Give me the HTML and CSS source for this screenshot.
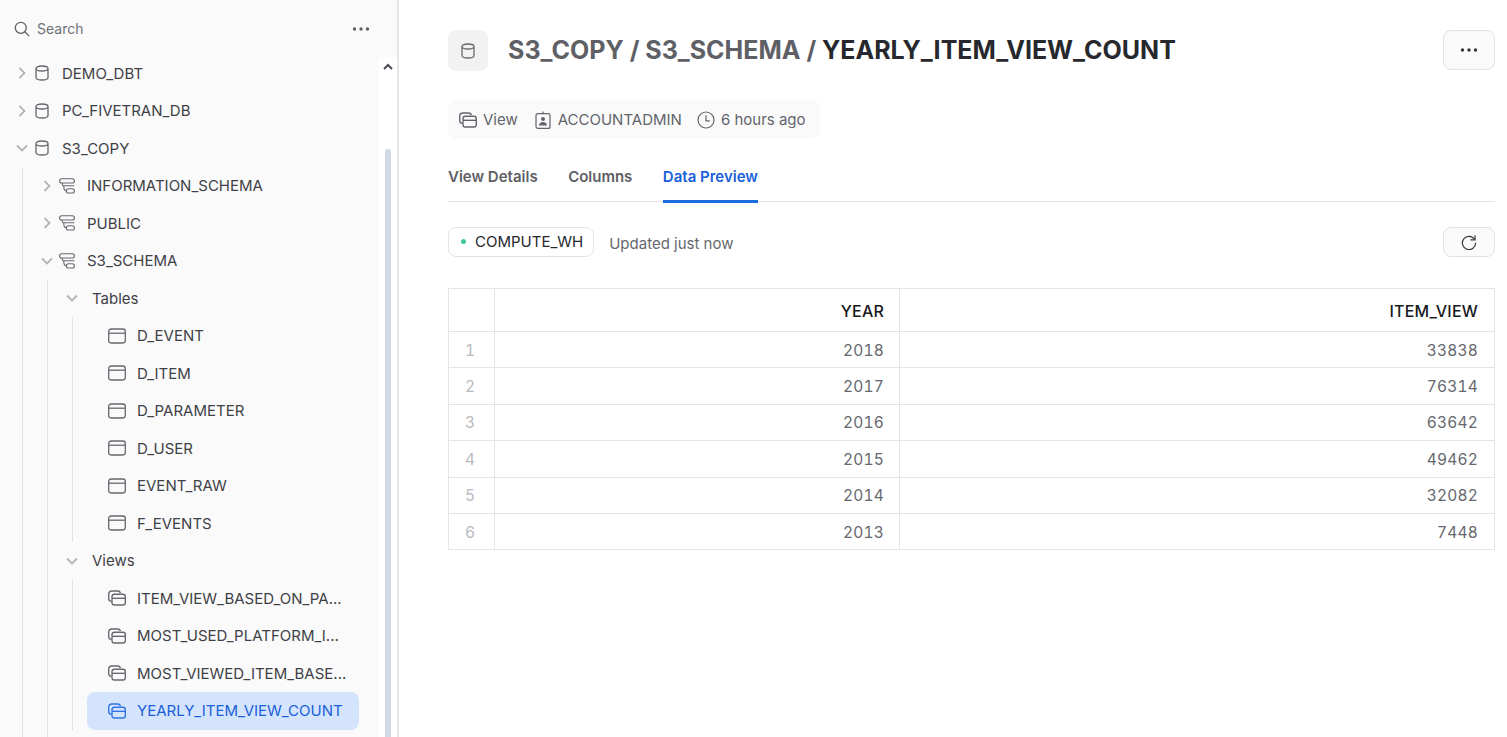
FILE: index.html
```html
<!DOCTYPE html>
<html lang="en">
<head>
<meta charset="utf-8">
<title>YEARLY_ITEM_VIEW_COUNT</title>
<link rel="stylesheet" href="styles.css">
</head>
<body>
<svg class="sprite" xmlns="http://www.w3.org/2000/svg">
  <symbol id="i-db" viewBox="0 0 16 16"><path d="M2 3.500C2 2 4.600 1 8 1s6 1 6 2.500v9C14 14 11.400 15 8 15s-6-1-6-2.500zM2 3.500C2 5 4.600 6 8 6s6-1 6-2.500" fill="none" stroke="currentColor" stroke-width="1.300"/></symbol>
  <symbol id="i-schema" viewBox="0 0 16 16"><g fill="none" stroke="currentColor" stroke-width="1.100"><rect x=".6" y=".8" width="14.800" height="4.200" rx="2.100"/><path d="M3.200 5v1.200c0 1 .6 1.600 1.600 1.600h10.600"/><rect x="7.400" y="10.800" width="8" height="4.200" rx="2.100"/><path d="M4.800 7.800v1c0 2.200.8 4 2.600 4.100"/></g></symbol>
  <symbol id="i-table" viewBox="0 0 18 16"><g fill="none" stroke="currentColor" stroke-width="1.300"><rect x=".7" y="1" width="16.600" height="14" rx="2.400"/><path d="M.7 5.200h16.600"/></g></symbol>
  <symbol id="i-view" viewBox="0 0 18 16"><g fill="none" stroke="currentColor" stroke-width="1.350"><path d="M3.700 11.400c-1.700 0-3-1.200-3-2.900V4.200c0-1.900 1.400-3.200 3.300-3.200h5.500c1.500 0 2.600.7 3 2"/><rect x="4" y="4.200" width="13.300" height="10.800" rx="2.300"/><path d="M4 8.300h13.300"/></g></symbol>
  <symbol id="i-search" viewBox="0 0 16 16"><g fill="none" stroke="currentColor" stroke-width="1.300"><circle cx="6.800" cy="6.800" r="5.500"/><path d="M10.800 10.800l4.300 4.300"/></g></symbol>
  <symbol id="i-badge" viewBox="0 0 16 18"><g fill="none" stroke="currentColor" stroke-width="1.200"><rect x="1" y="2.600" width="14" height="14.800" rx="2"/><path d="M8 .5v2"/></g><circle cx="8" cy="8" r="2" fill="currentColor"/><path d="M4 14.500c0-2.300 1.700-3.500 4-3.500s4 1.200 4 3.500z" fill="currentColor"/></symbol>
  <symbol id="i-clock" viewBox="0 0 18 18"><g fill="none" stroke="currentColor" stroke-width="1.200"><circle cx="9" cy="9" r="8"/><path d="M9 4.300V9.800h3.800"/></g></symbol>
  <symbol id="i-refresh" viewBox="0 0 16 16"><g fill="none" stroke="currentColor" stroke-width="1.200"><path d="M13.600 5.500A6.600 6.600 0 1 0 14.600 8.800"/><path d="M14 1.200v4.600H9.400"/></g></symbol>
  <symbol id="i-more" viewBox="0 0 18 4"><g fill="currentColor"><circle cx="2.500" cy="2" r="1.700"/><circle cx="9" cy="2" r="1.700"/><circle cx="15.500" cy="2" r="1.700"/></g></symbol>
  <symbol id="i-right" viewBox="0 0 10 12"><path d="M2.500 1l5 5-5 5" fill="none" stroke="currentColor" stroke-width="1.800"/></symbol>
  <symbol id="i-down" viewBox="0 0 12 10"><path d="M1 2.500l5 5 5-5" fill="none" stroke="currentColor" stroke-width="1.800"/></symbol>
  <symbol id="i-up" viewBox="0 0 10 8"><path d="M1 6l4-4 4 4" fill="none" stroke="currentColor" stroke-width="2"/></symbol>
</svg>

<div class="app">
  <aside class="sidebar">
    <div class="search-bar">
      <svg class="ic-search"><use href="#i-search"/></svg>
      <span class="search-label">Search</span>
      <svg class="ic-more-side"><use href="#i-more"/></svg>
    </div>
    <div class="side-body">
      <nav class="tree">
        <div class="row"><span class="chev"><svg class="chev-r"><use href="#i-right"/></svg></span><svg class="ic-db"><use href="#i-db"/></svg><span class="lbl">DEMO_DBT</span></div>
        <div class="row"><span class="chev"><svg class="chev-r"><use href="#i-right"/></svg></span><svg class="ic-db"><use href="#i-db"/></svg><span class="lbl">PC_FIVETRAN_DB</span></div>
        <div class="row"><span class="chev"><svg class="chev-d"><use href="#i-down"/></svg></span><svg class="ic-db"><use href="#i-db"/></svg><span class="lbl">S3_COPY</span></div>
        <div class="nest">
          <div class="row"><span class="chev"><svg class="chev-r"><use href="#i-right"/></svg></span><svg class="ic-db"><use href="#i-schema"/></svg><span class="lbl">INFORMATION_SCHEMA</span></div>
          <div class="row"><span class="chev"><svg class="chev-r"><use href="#i-right"/></svg></span><svg class="ic-db"><use href="#i-schema"/></svg><span class="lbl">PUBLIC</span></div>
          <div class="row"><span class="chev"><svg class="chev-d"><use href="#i-down"/></svg></span><svg class="ic-db"><use href="#i-schema"/></svg><span class="lbl">S3_SCHEMA</span></div>
          <div class="nest">
            <div class="row group"><span class="chev"><svg class="chev-d"><use href="#i-down"/></svg></span><span class="lbl">Tables</span></div>
            <div class="nest leafs">
              <div class="row leaf"><svg class="ic-leaf"><use href="#i-table"/></svg><span class="lbl">D_EVENT</span></div>
              <div class="row leaf"><svg class="ic-leaf"><use href="#i-table"/></svg><span class="lbl">D_ITEM</span></div>
              <div class="row leaf"><svg class="ic-leaf"><use href="#i-table"/></svg><span class="lbl">D_PARAMETER</span></div>
              <div class="row leaf"><svg class="ic-leaf"><use href="#i-table"/></svg><span class="lbl">D_USER</span></div>
              <div class="row leaf"><svg class="ic-leaf"><use href="#i-table"/></svg><span class="lbl">EVENT_RAW</span></div>
              <div class="row leaf"><svg class="ic-leaf"><use href="#i-table"/></svg><span class="lbl">F_EVENTS</span></div>
            </div>
            <div class="row group"><span class="chev"><svg class="chev-d"><use href="#i-down"/></svg></span><span class="lbl">Views</span></div>
            <div class="nest leafs">
              <div class="row leaf"><svg class="ic-leaf"><use href="#i-view"/></svg><span class="lbl">ITEM_VIEW_BASED_ON_PA...</span></div>
              <div class="row leaf"><svg class="ic-leaf"><use href="#i-view"/></svg><span class="lbl">MOST_USED_PLATFORM_I...</span></div>
              <div class="row leaf"><svg class="ic-leaf"><use href="#i-view"/></svg><span class="lbl">MOST_VIEWED_ITEM_BASE...</span></div>
              <div class="row leaf selected"><svg class="ic-leaf"><use href="#i-view"/></svg><span class="lbl">YEARLY_ITEM_VIEW_COUNT</span></div>
            </div>
            <div class="tree-tail"></div>
          </div>
        </div>
      </nav>
      <div class="scrollbar">
        <svg class="scroll-up"><use href="#i-up"/></svg>
        <div class="scroll-thumb"></div>
      </div>
    </div>
  </aside>

  <main class="main">
    <header class="title-row">
      <div class="title-icon"><svg class="ic-title"><use href="#i-db"/></svg></div>
      <h1 class="title"><span class="crumb">S3_COPY / S3_SCHEMA / </span>YEARLY_ITEM_VIEW_COUNT</h1>
      <button class="btn btn-more"><svg class="ic-more-main"><use href="#i-more"/></svg></button>
    </header>

    <div class="meta">
      <span class="meta-item m-view"><svg class="ic-meta-view"><use href="#i-view"/></svg>View</span>
      <span class="meta-item m-role"><svg class="ic-meta-badge"><use href="#i-badge"/></svg>ACCOUNTADMIN</span>
      <span class="meta-item"><svg class="ic-meta-clock"><use href="#i-clock"/></svg>6 hours ago</span>
    </div>

    <div class="tabs">
      <span class="tab">View Details</span>
      <span class="tab">Columns</span>
      <span class="tab active">Data Preview</span>
    </div>

    <div class="toolbar">
      <span class="wh"><span class="wh-dot"></span>COMPUTE_WH</span>
      <span class="updated">Updated just now</span>
      <button class="btn btn-refresh"><svg class="ic-refresh"><use href="#i-refresh"/></svg></button>
    </div>

    <table class="grid">
      <colgroup><col class="c-idx"><col class="c-year"><col></colgroup>
      <thead><tr><th></th><th>YEAR</th><th>ITEM_VIEW</th></tr></thead>
      <tbody>
        <tr><td class="idx">1</td><td>2018</td><td>33838</td></tr>
        <tr><td class="idx">2</td><td>2017</td><td>76314</td></tr>
        <tr><td class="idx">3</td><td>2016</td><td>63642</td></tr>
        <tr><td class="idx">4</td><td>2015</td><td>49462</td></tr>
        <tr><td class="idx">5</td><td>2014</td><td>32082</td></tr>
        <tr><td class="idx">6</td><td>2013</td><td>7448</td></tr>
      </tbody>
    </table>
  </main>
</div>
</body>
</html>
```
FILE: styles.css
```css
* { box-sizing: border-box; }
html, body { margin: 0; height: 100%; overflow: hidden; }
body { font-family: Inter, "Liberation Sans", sans-serif; font-size: 15px; color: #3f4147; background: #fff; }
.sprite { display: none; }
.app { display: flex; height: 100vh; }

/* Sidebar */
.sidebar { width: 399px; flex: none; display: flex; flex-direction: column; background: #fafafa; border-right: 2px solid #e6e6e6; }
.search-bar { height: 54.700px; flex: none; display: flex; align-items: center; padding: 3px 27px 0 14px; }
.ic-search { width: 16px; height: 16px; color: #5f6168; }
.search-label { margin-left: 7px; color: #6f7178; font-size: 14px; flex: 1; }
.ic-more-side { width: 18px; height: 4px; color: #5f6168; }
.side-body { flex: 1; min-height: 0; display: flex; }
.tree { flex: 1; min-width: 0; overflow: hidden; padding-left: 15px; }
.scrollbar { width: 18px; flex: none; margin-top: 3.300px; background: #fff; display: flex; flex-direction: column; align-items: center; }
.scroll-up { width: 10px; height: 8px; margin: 5px 0 0; color: #4a4c52; }
.scroll-thumb { width: 6px; flex: 1; margin-top: 78px; background: #cfdae4; border-radius: 3px 3px 0 0; }

.row { height: 37.5px; display: flex; align-items: center; white-space: nowrap; }
.chev { width: 14px; flex: none; display: flex; align-items: center; justify-content: center; color: #b4b5b8; }
.chev-r { width: 10px; height: 12px; }
.chev-d { width: 12px; height: 10px; }
.ic-db { width: 16px; height: 16px; margin-left: 5px; flex: none; color: #66686f; }
.lbl { margin-left: 12px; }
.nest { margin-left: 7px; border-left: 1px solid #e2e2e2; padding-left: 17px; }
.nest .nest.leafs { padding-left: 14px; }
.group .lbl { margin-left: 13px; }
.leaf { padding-left: 21px; border-radius: 8px; width: 272px; }
.ic-leaf { width: 18px; height: 16px; flex: none; color: #66686f; }
.leaf .lbl { margin-left: 11px; }
.selected { background: #d4e4fd; color: #1a5fd9; }
.selected .ic-leaf { color: #2f74e6; }
.tree-tail { height: 40px; }

/* Main */
.main { flex: 1; min-width: 0; padding: 30px 12px 0 49px; }
.title-row { display: flex; align-items: center; height: 41px; }
.title-icon { width: 40px; height: 41px; border-radius: 8px; background: #f2f2f2; display: flex; align-items: center; justify-content: center; color: #66686f; flex: none; }
.ic-title { width: 16px; height: 16px; }
.title { flex: 1; margin: 0 0 0 20px; font-size: 25.030px; font-weight: 700; color: #26282d; line-height: 41px; white-space: nowrap; }
.crumb { color: #5e6066; }
.btn { width: 52px; flex: none; padding: 0; display: flex; align-items: center; justify-content: center; background: #fafafa; border: 1px solid #e3e3e3; border-radius: 8px; color: #33353a; }
.btn-more { height: 40px; margin-bottom: 1px; }
.ic-more-main { width: 18px; height: 4px; }
.btn-refresh { height: 30px; margin-left: auto; }
.ic-refresh { width: 16px; height: 16px; }

.meta { margin-top: 29px; height: 39px; width: 372px; display: flex; align-items: center; gap: 16px; padding: 0 14px 0 11px; background: #fafafa; border-radius: 8px; color: #62646b; white-space: nowrap; }
.meta-item { display: flex; align-items: center; gap: 6px; }
.m-view { margin-right: 1px; }
.m-role { gap: 7px; margin-right: -1px; }
.ic-meta-view { width: 18px; height: 16px; }
.ic-meta-badge { width: 16px; height: 18px; }
.ic-meta-clock { width: 18px; height: 18px; }

.tabs { margin-top: 20px; height: 43px; display: flex; gap: 30.500px; border-bottom: 1px solid #e4e4e4; }
.tab { height: 44px; line-height: 36px; font-weight: 600; color: #5e6066; border-bottom: 3px solid transparent; }
.tab.active { color: #1a5fd9; border-bottom-color: #1a6ae0; }

.toolbar { margin-top: 25px; height: 30px; display: flex; align-items: center; }
.wh { height: 30px; display: flex; align-items: center; padding: 0 10px 2px 12px; background: #fff; border: 1px solid #e3e3e3; border-radius: 8px; color: #25272c; }
.wh-dot { width: 5px; height: 5px; border-radius: 50%; background: #3fc79a; margin-right: 9px; }
.updated { margin-left: 15px; color: #66686f; padding-top: 2px; }

.grid { margin-top: 31px; width: 100%; table-layout: fixed; border-collapse: collapse; color: #66686e; font-size: 15.500px; font-variant-numeric: tabular-nums; }
.c-idx { width: 46px; }
.c-year { width: 405px; }
.grid th, .grid td { border: 1px solid #e4e4e4; text-align: right; padding: 1px 15px 0 0; letter-spacing: .2px; }
.grid th { height: 43px; font-size: 16px; font-weight: 500; color: #17191d; }
.grid td { height: 36.400px; }
.grid tr > :last-child { padding-right: 16px; }
.grid td.idx { text-align: left; padding-left: 16px; color: #b9babd; }
```
